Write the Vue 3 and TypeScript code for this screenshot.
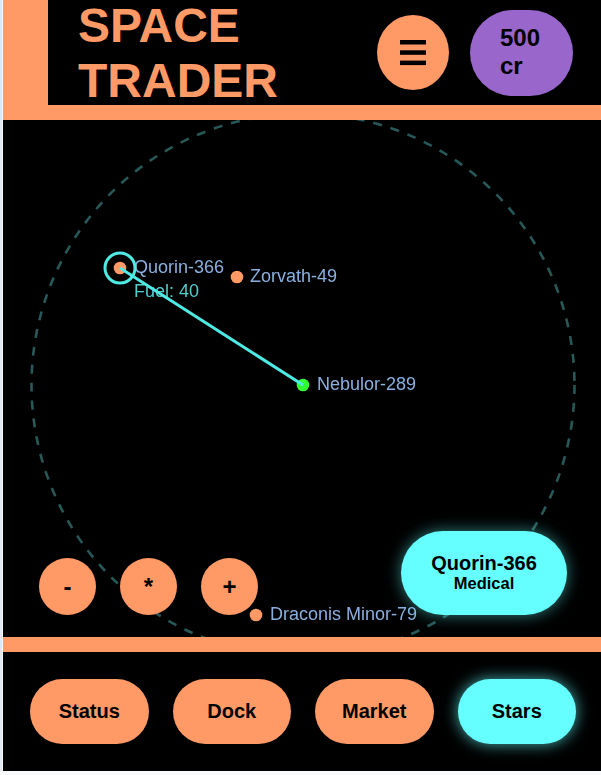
<script setup lang="ts">
interface Star { name: string; x: number; y: number; color: string; labelX: number; labelY: number }
const stars: Star[] = [
  { name: 'Quorin-366', x: 117, y: 148, color: '#ff9966', labelX: 131, labelY: 153 },
  { name: 'Zorvath-49', x: 234, y: 157, color: '#ff9966', labelX: 247, labelY: 162 },
  { name: 'Nebulor-289', x: 300, y: 265, color: '#33ff33', labelX: 314, labelY: 270 },
  { name: 'Draconis Minor-79', x: 253, y: 495, color: '#ff9966', labelX: 267, labelY: 500 },
]
const navItems = ['Status', 'Dock', 'Market', 'Stars']
const activeNav = 'Stars'
</script>

<template>
  <div class="app">
    <header class="header">
      <div class="accent"></div>
      <h1 class="title">SPACE TRADER</h1>
      <button class="menu">
        <svg width="26" height="26" viewBox="0 0 26 26">
          <rect x="0" y="0" width="26" height="4.5" fill="#000" />
          <rect x="0" y="10.3" width="26" height="4.5" fill="#000" />
          <rect x="0" y="20.6" width="26" height="4.5" fill="#000" />
        </svg>
      </button>
      <div class="credits">500<br />cr</div>
    </header>
    <main class="map">
      <svg class="chart" width="598" height="517" viewBox="0 0 598 517">
        <circle cx="300" cy="265" r="271.5" fill="none" stroke="#285858" stroke-width="2.6" stroke-dasharray="9 9" />
        <circle v-for="s in stars" :key="s.name" :cx="s.x" :cy="s.y" r="6.3" :fill="s.color" />
        <text v-for="s in stars" :key="s.name + 't'" :x="s.labelX" :y="s.labelY" class="label">{{ s.name }}</text>
        <text x="131" y="177" class="fuel">Fuel: 40</text>
        <line x1="117" y1="148" x2="300" y2="265" stroke="#4eeae4" stroke-width="3" />
        <circle cx="117" cy="148" r="15" fill="none" stroke="#4eeae4" stroke-width="3" />
      </svg>
      <div class="zoom">
        <button class="zoom-btn">-</button>
        <button class="zoom-btn">*</button>
        <button class="zoom-btn">+</button>
      </div>
      <div class="info">
        <div class="info-name">Quorin-366</div>
        <div class="info-type">Medical</div>
      </div>
    </main>
    <nav class="nav">
      <button v-for="n in navItems" :key="n" class="nav-btn" :class="{ active: n === activeNav }">{{ n }}</button>
    </nav>
  </div>
</template>

<style scoped>
.app {
  margin-left: 1px;
  width: 598px;
  height: 771px;
  background: #000;
  display: flex;
  flex-direction: column;
  font-family: "Liberation Sans", Arial, sans-serif;
  overflow: hidden;
}
.header {
  height: 105px;
  flex: none;
  display: flex;
  align-items: center;
  border-bottom: 15px solid #ff9966;
  box-sizing: content-box;
}
.accent {
  width: 45px;
  height: 105px;
  flex: none;
  background: #ff9966;
}
.title {
  margin: 0 0 0 30px;
  width: 270px;
  flex: none;
  font-size: 48px;
  line-height: 55px;
  font-weight: 700;
  color: #ff9966;
}
.menu {
  width: 72px;
  height: 75px;
  margin-left: 29px;
  flex: none;
  border: 0;
  border-radius: 50%;
  background: #ff9966;
  display: flex;
  align-items: center;
  justify-content: center;
  padding: 0;
}
.credits {
  margin-left: 21px;
  width: 103px;
  height: 86px;
  box-sizing: border-box;
  padding: 14px 0 0 30px;
  flex: none;
  border-radius: 43px;
  background: #9966cc;
  color: #000;
  font-size: 24px;
  line-height: 28px;
  font-weight: 700;
}
.map {
  position: relative;
  height: 517px;
  flex: none;
  overflow: hidden;
}
.chart {
  display: block;
  filter: blur(0.6px);
}
.label {
  font-family: "Liberation Sans", Arial, sans-serif;
  font-size: 18px;
  fill: #8ab0e0;
}
.fuel {
  font-family: "Liberation Sans", Arial, sans-serif;
  font-size: 18px;
  fill: #55cccc;
}
.zoom {
  position: absolute;
  left: 36px;
  top: 438px;
  display: flex;
  gap: 24px;
}
.zoom-btn {
  width: 57px;
  height: 57px;
  border: 0;
  border-radius: 50%;
  padding: 0;
  background: #ff9966;
  color: #000;
  font-family: "Liberation Sans", Arial, sans-serif;
  font-size: 24px;
  font-weight: 700;
}
.info {
  position: absolute;
  left: 398px;
  top: 411px;
  width: 166px;
  height: 84px;
  box-sizing: border-box;
  padding-bottom: 3px;
  border-radius: 42px;
  background: #66ffff;
  color: #000;
  box-shadow: 0 0 15px rgba(102, 255, 255, 0.5);
  display: flex;
  flex-direction: column;
  align-items: center;
  justify-content: center;
  font-weight: 700;
}
.info-name {
  font-size: 20px;
  line-height: 24px;
}
.info-type {
  font-size: 16.5px;
  line-height: 17px;
}
.nav {
  flex: none;
  height: 119px;
  border-top: 15px solid #ff9966;
  display: flex;
  align-items: center;
  gap: 24px;
  padding: 0 25px 0 27px;
  box-sizing: content-box;
}
.nav-btn {
  flex: 1;
  height: 65px;
  border: 0;
  border-radius: 32.5px;
  padding: 0;
  background: #ff9966;
  color: #000;
  font-family: "Liberation Sans", Arial, sans-serif;
  font-size: 20px;
  font-weight: 700;
}
.nav-btn.active {
  background: #66ffff;
  box-shadow: 0 0 15px rgba(102, 255, 255, 0.7);
}
</style>

<style>
html {
  background: #f8fafc;
}
body {
  border-left: 2px solid #e2e6ee;
}
</style>
